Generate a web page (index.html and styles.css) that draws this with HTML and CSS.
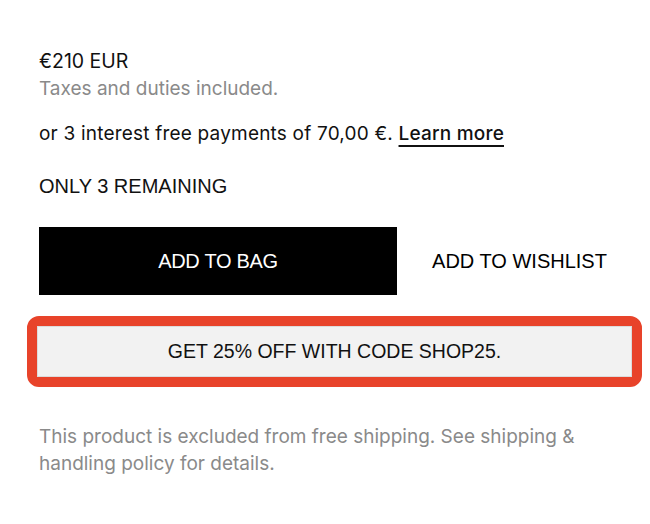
FILE: index.html
```html
<!DOCTYPE html>
<html>
<head>
<meta charset="utf-8">
<link rel="stylesheet" href="styles.css">
</head>
<body>
<div class="product">
  <div class="price-block">
    <div class="price">€210 EUR</div>
    <div class="taxes">Taxes and duties included.</div>
  </div>
  <p class="installments">or 3 interest free payments of 70,00 €. <a class="learn" href="#">Learn more</a></p>
  <p class="stock">ONLY 3 REMAINING</p>
  <div class="actions">
    <button class="btn-bag">ADD TO BAG</button>
    <button class="btn-wish">ADD TO WISHLIST</button>
  </div>
  <div class="highlight">
    <div class="promo">GET 25% OFF WITH CODE SHOP25.</div>
  </div>
  <p class="note">This product is excluded from free shipping. See shipping &amp; handling policy for details.</p>
</div>
</body>
</html>
```
FILE: styles.css
```css
html, body {
  margin: 0;
  padding: 0;
  background: #fff;
}
body {
  font-family: "Inter", "Liberation Sans", sans-serif;
  color: #111;
  font-size: 19px;
}
.product {
  padding: 48px 8px 0 39px;
  display: flex;
  flex-direction: column;
}
.price-block {
  line-height: 27px;
}
.price {
  color: #111;
  font-size: 19.5px;
}
.taxes {
  color: #8a8a8a;
}
.installments {
  margin: 18px 0 0;
  line-height: 27px;
  letter-spacing: 0.2px;
}
.learn {
  color: #111;
  font-weight: 500;
  text-decoration: underline;
  text-underline-offset: 5px;
  text-decoration-thickness: 2px;
}
.stock {
  margin: 26px 0 0;
  line-height: 27px;
  font-family: "Liberation Sans", Arial, sans-serif;
  font-size: 20px;
}
.actions {
  margin-top: 27px;
  display: flex;
  align-items: stretch;
}
.actions button {
  font-family: "Liberation Sans", Arial, sans-serif;
  font-size: 20px;
  border: none;
  cursor: pointer;
  height: 68px;
  padding: 0;
}
.btn-bag {
  width: 358px;
  background: #000;
  color: #fff;
  letter-spacing: -0.3px;
}
.btn-wish {
  flex: 1;
  background: #fff;
  color: #000;
}
.highlight {
  margin: 21px 0 0 -12px;
  border: 10px solid #e8432a;
  border-radius: 12px;
}
.promo {
  background: #f2f2f2;
  border: 1px solid #dcdcdc;
  height: 49px;
  display: flex;
  align-items: center;
  justify-content: center;
  font-family: "Liberation Sans", Arial, sans-serif;
  font-size: 19.5px;
  color: #111;
}
.note {
  margin: 36px 0 0;
  line-height: 27px;
  color: #8a8a8a;
  max-width: 560px;
}
```
